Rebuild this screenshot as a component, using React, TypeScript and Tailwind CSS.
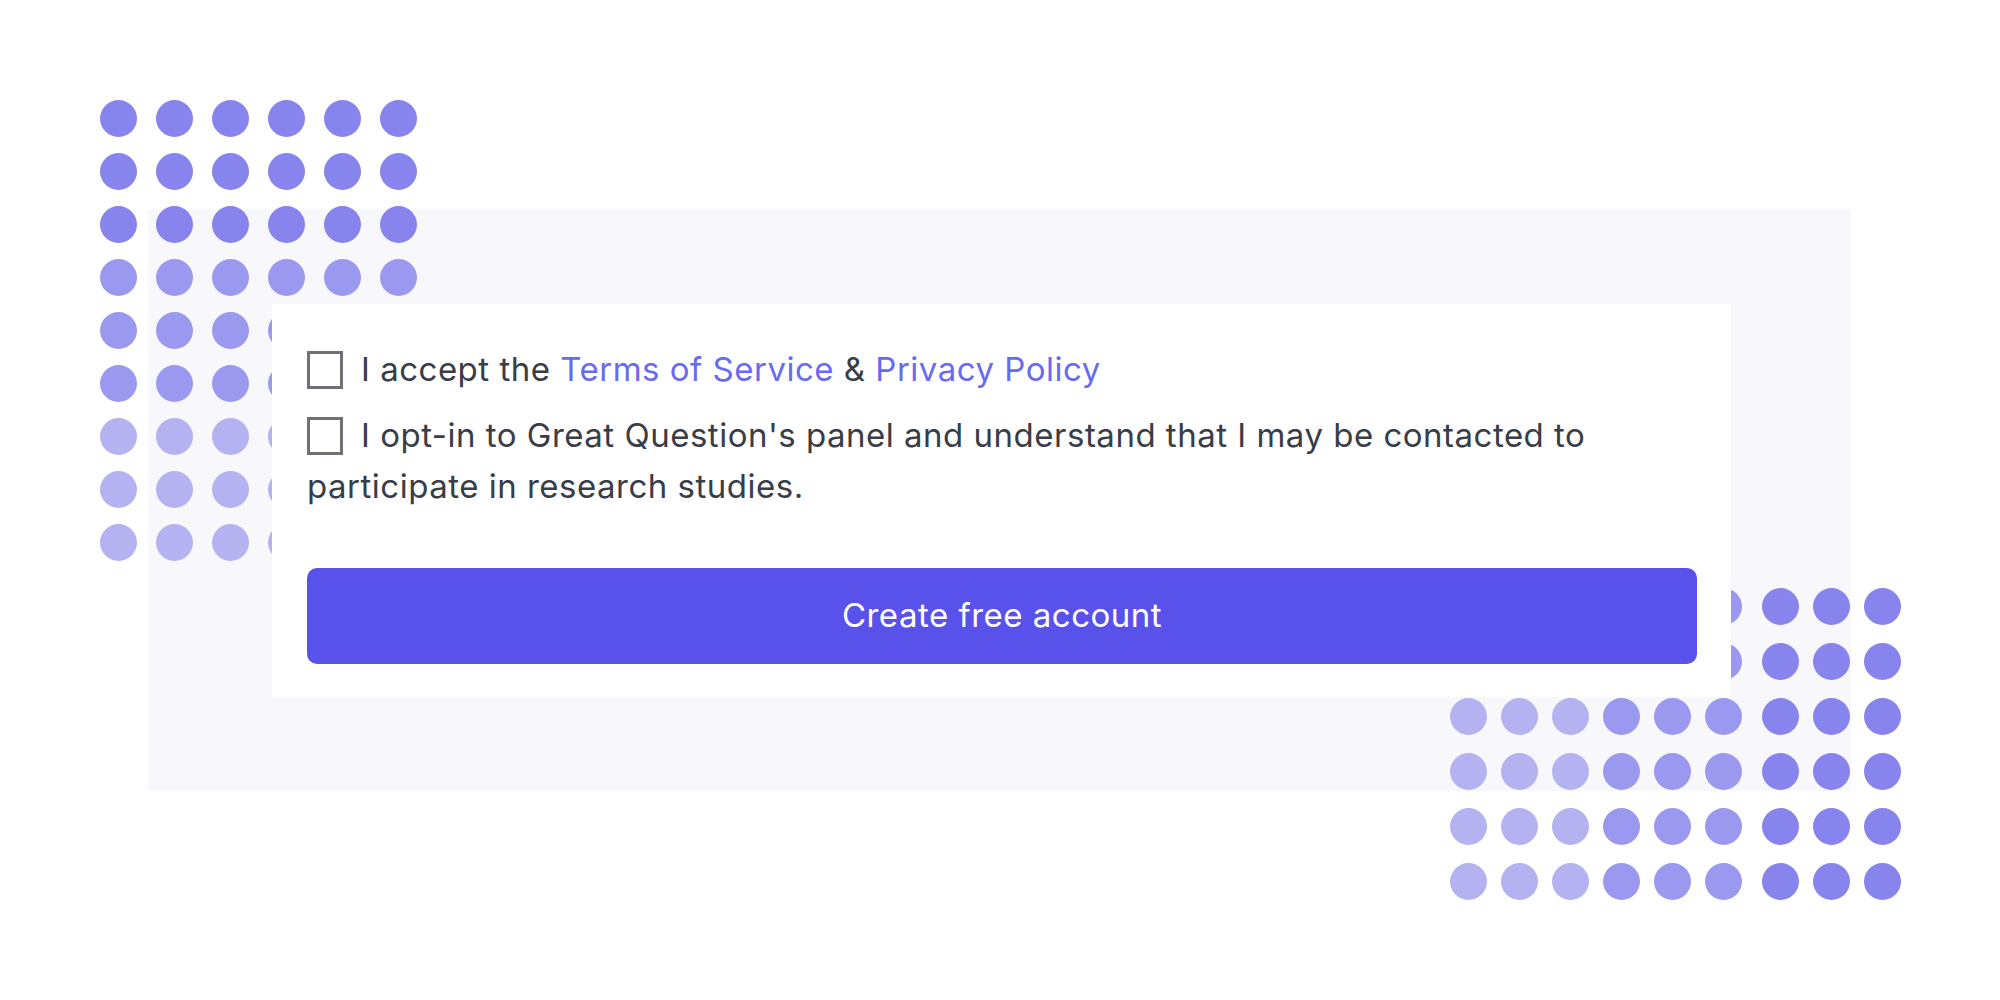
import React from 'react';

const leftRows = [
  '#8784ee', '#8784ee', '#8784ee',
  '#9b98ef', '#9b98ef', '#9b98ef',
  '#b4b2f0', '#b4b2f0', '#b4b2f0',
];

const rightGroups = ['#b4b2f0', '#9b98ef', '#8784ee'];

const Dot = ({ color }: { color: string }) => (
  <div className="w-[37px] h-[37px] rounded-full" style={{ backgroundColor: color }} />
);

const App: React.FC = () => {
  return (
    <div className="relative w-[2000px] h-[1000px] bg-white overflow-hidden font-['Inter',sans-serif]">
      {/* Light backdrop panel */}
      <div className="relative ml-[148px] pt-[209px]">
        <div className="w-[1703px] h-[582px] bg-[#f8f8fc] pt-[95px] pl-[124px]">
          {/* Form card */}
          <div className="relative z-10 w-[1459px] bg-white pt-[40px] pb-[33px] pl-[35px] pr-[34px]">
            <p className="text-[33px] leading-[51px] tracking-[0.5px] text-[#383d48]">
              <span className="inline-block w-[36px] h-[38px] border-[3px] border-[#6f7075] bg-white mr-[18px] align-[-8px]" />
              I accept the <a className="text-[#676bf1]">Terms of Service</a> &amp;{' '}
              <a className="text-[#676bf1]">Privacy Policy</a>
            </p>
            <p className="mt-[15px] text-[33px] leading-[51px] tracking-[0.5px] text-[#383d48]">
              <span className="inline-block w-[36px] h-[38px] border-[3px] border-[#6f7075] bg-white mr-[18px] align-[-8px]" />
              I opt-in to Great Question's panel and understand that I may be contacted to participate in research studies.
            </p>
            <button className="mt-[56px] w-full h-[96px] rounded-[10px] bg-[#5852eb] text-white text-[33px] tracking-[0.5px]">
              Create free account
            </button>
          </div>
        </div>
      </div>

      {/* Top-left dots */}
      <div className="absolute left-[100px] top-[100px] grid grid-cols-6 gap-x-[19px] gap-y-[16px]">
        {leftRows.map((c, r) =>
          [0, 1, 2, 3, 4, 5].map((i) => <Dot key={`${r}-${i}`} color={c} />)
        )}
      </div>

      {/* Bottom-right dots */}
      <div className="absolute left-[1450px] top-[588px] flex gap-x-[14px]">
        {rightGroups.map((c, g) => (
          <div key={g} className={`grid grid-cols-3 gap-x-[14px] gap-y-[18px] ${g === 2 ? 'ml-[6px]' : ''}`}>
            {Array.from({ length: 18 }).map((_, i) => (
              <Dot key={i} color={c} />
            ))}
          </div>
        ))}
      </div>
    </div>
  );
};

export default App;
